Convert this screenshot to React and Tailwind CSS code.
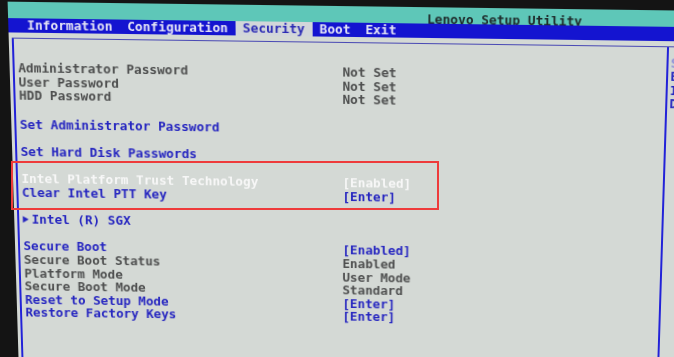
import React from "react";

const font = { fontFamily: '"DejaVu Sans Mono", "Liberation Mono", monospace' };

function Row({ label, value, lc, vc, arrow }) {
  return (
    <div className="flex h-[13.6px] leading-[13.6px] whitespace-pre">
      <div className={`w-[324.3px] shrink-0 pl-[3.3px] flex ${lc}`}>
        {arrow && (
          <svg width="9" height="13.6" viewBox="0 0 9 13.6" className="shrink-0">
            <polygon points="0.6,3.4 6.6,6.8 0.6,10.2" fill="#2626c0" />
          </svg>
        )}
        <span>{label}</span>
      </div>
      {value && <div className={vc}>{value}</div>}
    </div>
  );
}

const Gap = ({ h = "h-[13.6px]" }) => <div className={h} />;

export default function App() {
  const gray = "text-[#4e4f4f]";
  const blue = "text-[#2626c0]";
  const white = "text-[#f7f7f7]";
  return (
    <div
      className="relative w-[674px] h-[357px] overflow-hidden bg-[#141414] text-[12.7px] font-bold"
      style={font}
    >
      <div className="w-[720px] h-[420px] ml-[-23px] origin-[360px_178px] [transform:perspective(1000px)_rotateX(-5.4deg)_skewY(0.75deg)] pl-[35.7px] pt-[8px] flex flex-col">
        <div className="flex-1 flex flex-col bg-[#d4d9d5]">
          {/* title bar */}
          <div className="h-[16px] bg-[#5ec7b8] pl-[413px]">
            <div className="leading-[13px] mt-[4.5px] text-[#1e2a2a] whitespace-pre">
              Lenovo Setup Utility
            </div>
          </div>
          {/* menu bar */}
          <div className="h-[14px] bg-[#1414d0] flex pl-[11.6px] leading-[14px] whitespace-pre">
            <div className="px-[7.3px] text-[#e4e4f6]">Information</div>
            <div className="px-[7.3px] text-[#e4e4f6]">Configuration</div>
            <div className="px-[7.3px] bg-[#d2d6da] text-[#2a2ab4]">Security</div>
            <div className="px-[7.3px] text-[#e4e4f6]">Boot</div>
            <div className="px-[7.3px] text-[#e4e4f6]">Exit</div>
          </div>
          {/* panel */}
          <div className="flex-1 mt-[4.5px] ml-[3.5px] border-t-[1.5px] border-[#4a4ab4] flex">
            <div className="w-[649px] shrink-0 border-l-2 border-r-2 border-[#2222d8] pt-[22.6px]">
              <Row label="Administrator Password" value="Not Set" lc={gray} vc={gray} />
              <Row label="User Password" value="Not Set" lc={gray} vc={gray} />
              <Row label="HDD Password" value="Not Set" lc={gray} vc={gray} />
              <Gap h="h-[15.2px]" />
              <Row label="Set Administrator Password" lc={blue} />
              <Gap />
              <Row label="Set Hard Disk Passwords" lc={blue} />
              <Gap />
              <Row label="Intel Platform Trust Technology" value="[Enabled]" lc={white} vc={white} />
              <Row label="Clear Intel PTT Key" value="[Enter]" lc={blue} vc={blue} />
              <Gap />
              <Row label="Intel (R) SGX" lc={blue} arrow />
              <Gap />
              <Row label="Secure Boot" value="[Enabled]" lc={blue} vc={blue} />
              <Row label="Secure Boot Status" value="Enabled" lc={gray} vc={gray} />
              <Row label="Platform Mode" value="User Mode" lc={gray} vc={gray} />
              <Row label="Secure Boot Mode" value="Standard" lc={gray} vc={gray} />
              <Row label="Reset to Setup Mode" value="[Enter]" lc={blue} vc={blue} />
              <Row label="Restore Factory Keys" value="[Enter]" lc={blue} vc={blue} />
            </div>
            <div className="flex-1 min-w-0 pt-[9px] pl-[2px] leading-[13.6px] whitespace-pre">
              <div className="text-[#8c8cd8]">Set the</div>
              <div className={blue}>Enable</div>
              <div className={blue}>Install</div>
              <div className={blue}>Disable</div>
            </div>
          </div>
        </div>
      </div>
      {/* red annotation box */}
      <div className="absolute left-[11px] top-[161px] w-[428px] h-[49px] border-[2.5px] border-[#ee3b3b]" />
    </div>
  );
}
